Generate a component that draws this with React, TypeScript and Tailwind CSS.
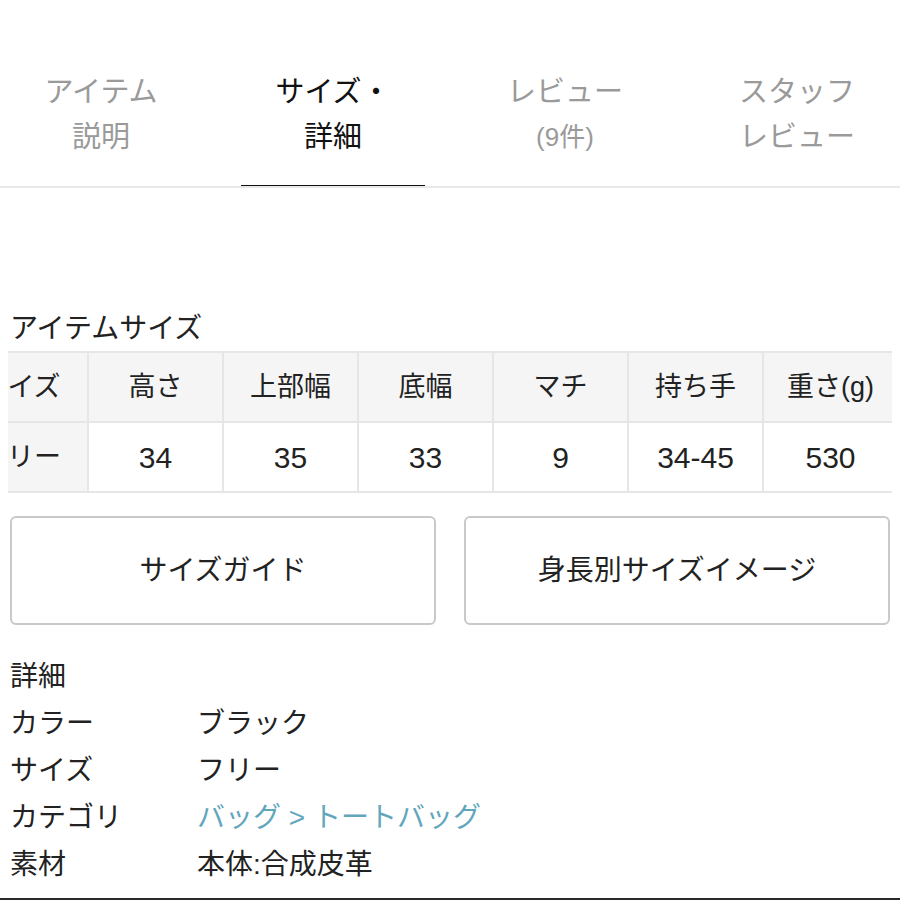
import React from "react";

const FONT = { fontFamily: '"Liberation Sans", "Noto Sans CJK JP", sans-serif' };

const tabs = [
  { l1: "アイテム", l2: "説明", active: false },
  { l1: "サイズ・", l2: "詳細", active: true },
  { l1: "レビュー", l2: "(9件)", active: false },
  { l1: "スタッフ", l2: "レビュー", active: false },
];

const heads = ["サイズ", "高さ", "上部幅", "底幅", "マチ", "持ち手", "重さ(g)"];
const vals = ["フリー", "34", "35", "33", "9", "34-45", "530"];

const details: { k: string; v: string; link?: boolean }[] = [
  { k: "カラー", v: "ブラック" },
  { k: "サイズ", v: "フリー" },
  { k: "カテゴリ", v: "バッグ > トートバッグ", link: true },
  { k: "素材", v: "本体:合成皮革" },
];

export default function App() {
  return (
    <div
      className="h-[900px] w-[900px] overflow-hidden bg-white border-b-2 border-[#2a2a2a] text-[#222]"
      style={FONT}
    >
      {/* Tabs */}
      <div className="flex border-b-2 border-[#e9e9e9] overflow-hidden">
        <div className="flex -ml-[15px]">
          {tabs.map((t, i) => (
            <div key={i} className="w-[232px] shrink-0 px-[24px]">
              <div
                className={
                  "pt-[70px] pb-[25px] text-center text-[29px] leading-[45px] " +
                  (t.active
                    ? "text-[#111] border-b-[3px] border-[#111] -mb-[2px]"
                    : "text-[#9a9a9a]")
                }
              >
                <div>{t.l1}</div>
                <div className={i === 2 ? "text-[26px]" : ""}>{t.l2}</div>
              </div>
            </div>
          ))}
        </div>
      </div>

      {/* Item size */}
      <div className="mt-[123px] px-[10px] text-[28px] leading-[36px]">アイテムサイズ</div>
      <div className="mt-[4px] mx-[8px] overflow-hidden">
        <table className="-ml-[56px] border-collapse text-[27px] text-[#222]">
          <tbody>
            <tr className="h-[70px]">
              {heads.map((h, i) => (
                <td
                  key={i}
                  className="w-[135px] min-w-[135px] border-2 border-[#e6e6e6] bg-[#f5f5f5] text-center align-middle"
                >
                  {h}
                </td>
              ))}
            </tr>
            <tr className="h-[70px]">
              {vals.map((v, i) => (
                <td
                  key={i}
                  className={
                    "w-[135px] min-w-[135px] border-2 border-[#e6e6e6] text-center align-middle " +
                    (i === 0 ? "bg-[#f5f5f5] text-[27px]" : "bg-white text-[30px]")
                  }
                >
                  {v}
                </td>
              ))}
            </tr>
          </tbody>
        </table>
      </div>

      {/* Buttons */}
      <div className="mt-[23px] px-[10px] flex gap-[28px]">
        <div className="flex-1 h-[109px] border-2 border-[#c9c9c9] rounded-[6px] flex items-center justify-center text-[28px] text-[#222]">
          サイズガイド
        </div>
        <div className="flex-1 h-[109px] border-2 border-[#c9c9c9] rounded-[6px] flex items-center justify-center text-[28px] text-[#222]">
          身長別サイズイメージ
        </div>
      </div>

      {/* Details */}
      <div className="mt-[28px] px-[10px] text-[28px] leading-[47px]">
        <div>詳細</div>
        {details.map((d, i) => (
          <div key={i} className="flex">
            <div className="w-[187px] shrink-0">{d.k}</div>
            <div className={d.link ? "text-[#62a6bd]" : ""}>{d.v}</div>
          </div>
        ))}
      </div>
    </div>
  );
}
